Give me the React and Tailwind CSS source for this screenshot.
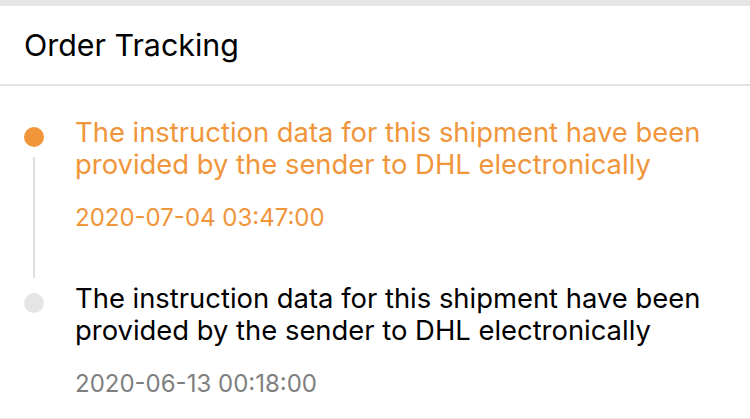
import React from "react";

const events = [
  {
    text: "The instruction data for this shipment have been provided by the sender to DHL electronically",
    time: "2020-07-04 03:47:00",
    active: true,
  },
  {
    text: "The instruction data for this shipment have been provided by the sender to DHL electronically",
    time: "2020-06-13 00:18:00",
    active: false,
  },
];

export default function App() {
  return (
    <div className="w-[750px] h-[419px] bg-white overflow-hidden" style={{ fontFamily: "Inter, 'Liberation Sans', sans-serif" }}>
      <div className="h-[6px] bg-[#e5e5e5]" />
      <div className="h-[80px] flex items-center px-[24px] border-b-2 border-[#e2e2e2]">
        <h1 className="text-[30.4px] leading-[36px] text-black">Order Tracking</h1>
      </div>
      <div className="pt-[30px] pb-[20px] border-b-2 border-[#e8e8e8]">
        {events.map((e, i) => (
          <div key={i} className="flex">
            <div className="w-[75px] flex flex-col items-center pr-[7px] pt-[11px]">
              <div className={`w-[20px] h-[20px] rounded-full shrink-0 ${e.active ? "bg-[#f0953a]" : "bg-[#e5e5e5]"}`} />
              {i < events.length - 1 && <div className="w-[2px] flex-1 bg-[#dedede] mt-[10px] mb-[4px]" />}
            </div>
            <div className={`flex-1 pr-[30px] ${i < events.length - 1 ? "pb-[50px]" : ""}`}>
              <p className={`text-[27.4px] leading-[32px] ${e.active ? "text-[#f0953a]" : "text-black"}`}>{e.text}</p>
              <p className={`mt-[24px] text-[24px] leading-[28px] ${e.active ? "text-[#f0953a]" : "text-[#7f7f7f]"}`}>{e.time}</p>
            </div>
          </div>
        ))}
      </div>
    </div>
  );
}
